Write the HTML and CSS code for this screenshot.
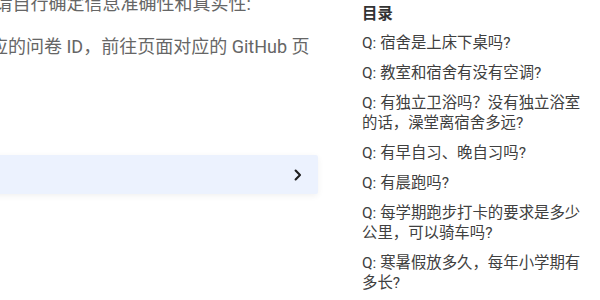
FILE: index.html
```html
<!DOCTYPE html>
<html lang="zh-CN">
<head>
<meta charset="utf-8">
<title>FAQ</title>
<link rel="stylesheet" href="styles.css">
</head>
<body>
<div class="page">
  <main class="content">
    <p class="para">以下内容来自2023届同学，请自行确定信息准确性和真实性:</p>
    <p class="para">如发现信息有误，请找到对应的问卷 ID，前往页面对应的 GitHub 页面提交 Issue。</p>
    <details class="qa">
      <summary class="qa-head">
        <span class="qa-title">展开全部</span>
        <svg class="chev" width="8" height="12" viewBox="0 0 8 12" aria-hidden="true"><polyline points="1.6,1.6 6,6 1.6,10.4" fill="none" stroke="#1f1f1f" stroke-width="2.1" stroke-linecap="round" stroke-linejoin="round"/></svg>
      </summary>
    </details>
  </main>
  <aside class="toc">
    <div class="toc-title">目录</div>
    <ul class="toc-list">
      <li>Q: 宿舍是上床下桌吗?</li>
      <li>Q: 教室和宿舍有没有空调?</li>
      <li>Q: 有独立卫浴吗？没有独立浴室的话，澡堂离宿舍多远?</li>
      <li>Q: 有早自习、晚自习吗?</li>
      <li>Q: 有晨跑吗?</li>
      <li>Q: 每学期跑步打卡的要求是多少公里，可以骑车吗?</li>
      <li>Q: 寒暑假放多久，每年小学期有多长?</li>
    </ul>
  </aside>
</div>
</body>
</html>
```
FILE: styles.css
```css
html, body {
  margin: 0;
  padding: 0;
  background: #fff;
  overflow: hidden;
}
body {
  font-family: Roboto, "Noto Sans CJK SC", sans-serif;
}
.page {
  display: flex;
  align-items: flex-start;
  width: 600px;
  height: 300px;
}
.content {
  flex: none;
  width: 544px;
  margin-left: -226px;
  margin-top: -10px;
}
.para {
  margin: 0 0 16px;
  font-size: 18px;
  line-height: 27px;
  color: #666;
}
.qa {
  margin-top: 68px;
  background: #ecf2fe;
  border-radius: 2px;
  box-shadow: 0 2px 6px rgba(0, 0, 0, 0.06);
}
.qa-head {
  list-style: none;
  display: flex;
  align-items: center;
  justify-content: space-between;
  height: 39px;
  padding: 0 16px 0 20px;
  cursor: pointer;
  font-size: 15px;
  color: #333;
}
.qa-head::-webkit-details-marker {
  display: none;
}
.chev {
  display: block;
}
.toc {
  flex: none;
  width: 224px;
  margin-left: 44px;
  padding-top: 4px;
  color: #404040;
}
.toc-title {
  font-size: 15.4px;
  line-height: 20px;
  font-weight: 700;
  color: #333;
  margin-bottom: 9px;
}
.toc-list {
  list-style: none;
  margin: 0;
  padding: 0;
}
.toc-list li {
  font-size: 15.4px;
  line-height: 20px;
  margin-bottom: 10px;
}
```
